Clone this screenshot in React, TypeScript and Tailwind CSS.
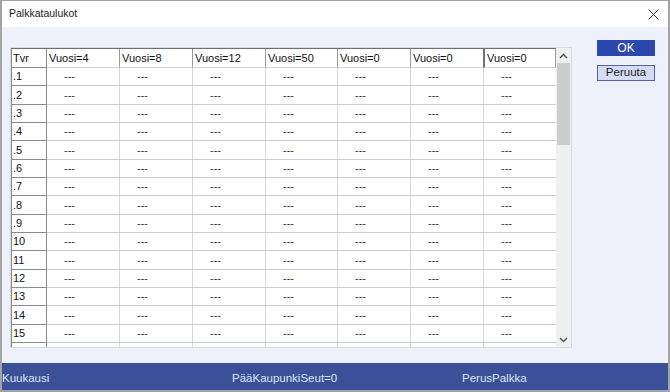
import React from "react";

const cols = ["Vuosi=4", "Vuosi=8", "Vuosi=12", "Vuosi=50", "Vuosi=0", "Vuosi=0", "Vuosi=0"];
const widths = [73, 73, 73, 72, 73, 73, 73];
const rows = [".1", ".2", ".3", ".4", ".5", ".6", ".7", ".8", ".9", "10", "11", "12", "13", "14", "15", ""];

export default function App() {
  return (
    <div
      className="w-[670px] h-[392px] flex flex-col bg-white border-x-2 border-b-2 border-t border-[#a3a3a3] overflow-hidden"
      style={{ fontFamily: '"Liberation Sans", Arial, sans-serif' }}
    >
      {/* title bar */}
      <div className="h-[26px] shrink-0 bg-white flex items-center justify-between pl-[7px] pr-[8px]">
        <span className="text-[10.5px] text-[#1a1a1a]">Palkkataulukot</span>
        <svg width="11" height="11" viewBox="0 0 11 11" className="mr-[1px]">
          <path d="M0.5 0.5 L10.5 10.5 M10.5 0.5 L0.5 10.5" stroke="#333" strokeWidth="1" />
        </svg>
      </div>

      {/* body */}
      <div className="flex-1 bg-[#eef1f9] flex items-start pl-[8px] pt-[13px]">
        {/* grid */}
        <div className="mt-[7px] w-[562px] h-[301px] border border-[#d9dbe2] flex bg-white overflow-hidden">
          <div className="w-[545px] h-full overflow-hidden">
            {/* header */}
            <div className="flex h-[20px] border-t border-[#6f6f6f] bg-white">
              <div className="w-[36px] shrink-0 border-l border-r border-b border-[#8a8a8a] text-[11px] text-[#111] flex items-center pl-[1px]">
                Tvr
              </div>
              {cols.map((c, i) => (
                <div
                  key={i}
                  style={{ width: widths[i] }}
                  className={
                    "shrink-0 border-r border-r-[#9a9a9a] border-b border-b-[#d4d4d4] text-[11px] text-[#111] flex items-center pl-[2px] " +
                    (i === 6 ? "border-l-2 border-l-[#6f6f6f] -ml-[1px]" : "")
                  }
                >
                  {c}
                </div>
              ))}
            </div>
            {/* rows */}
            {rows.map((r, ri) => (
              <div key={ri} className="flex h-[18.33px]">
                <div className="w-[36px] shrink-0 border-l border-r border-b border-[#8a8a8a] text-[11px] text-[#111] flex items-center pl-[1px]">
                  {r}
                </div>
                {cols.map((_, i) => (
                  <div
                    key={i}
                    style={{ width: widths[i] }}
                    className="shrink-0 border-r border-r-[#d6d6d8] border-b border-b-[#c7cbe0] text-[11px] text-[#333] flex items-center pl-[17px]"
                  >
                    {r ? "---" : ""}
                  </div>
                ))}
              </div>
            ))}
          </div>
          {/* scrollbar */}
          <div className="w-[15px] h-full bg-[#f0f0f0] flex flex-col items-center">
            <div className="h-[15px] w-full flex items-center justify-center">
              <svg width="9" height="6" viewBox="0 0 9 6">
                <path d="M1 5 L4.5 1.5 L8 5" stroke="#555" strokeWidth="1.5" fill="none" />
              </svg>
            </div>
            <div className="w-[13px] h-[82px] bg-[#cdcdcd]" />
            <div className="flex-1" />
            <div className="h-[15px] w-full flex items-center justify-center">
              <svg width="9" height="6" viewBox="0 0 9 6">
                <path d="M1 1 L4.5 4.5 L8 1" stroke="#555" strokeWidth="1.5" fill="none" />
              </svg>
            </div>
          </div>
        </div>

        {/* buttons */}
        <div className="ml-[25px] flex flex-col gap-[9px]">
          <div className="w-[58px] h-[16px] bg-[#2c48ac] text-white text-[12px] flex items-center justify-center">
            OK
          </div>
          <div className="w-[58px] h-[16px] bg-[#d5ddf5] border border-[#5262a8] text-[#1a1a1a] text-[11.5px] flex items-center justify-center">
            Peruuta
          </div>
        </div>
      </div>

      {/* status bar */}
      <div
        className="h-[28px] shrink-0 bg-[#3a5199] border-t border-[#f4f6fb] flex items-end pb-[3px] text-[11.5px] text-[#dfe4f2]"
        style={{ fontFamily: '"Liberation Sans", Arial, sans-serif' }}
      >
        <span className="w-[230px]">Kuukausi</span>
        <span className="w-[230px]">PääKaupunkiSeut=0</span>
        <span>PerusPalkka</span>
      </div>
    </div>
  );
}
